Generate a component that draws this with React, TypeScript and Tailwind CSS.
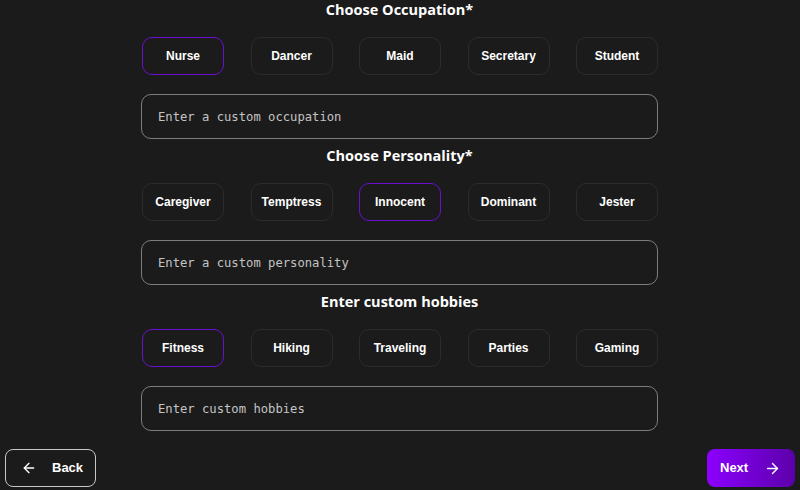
import { useState } from 'react';

const sections = [
  {
    title: 'Choose Occupation*',
    options: ['Nurse', 'Dancer', 'Maid', 'Secretary', 'Student'],
    selected: 'Nurse',
    placeholder: 'Enter a custom occupation',
  },
  {
    title: 'Choose Personality*',
    options: ['Caregiver', 'Temptress', 'Innocent', 'Dominant', 'Jester'],
    selected: 'Innocent',
    placeholder: 'Enter a custom personality',
  },
  {
    title: 'Enter custom hobbies',
    options: ['Fitness', 'Hiking', 'Traveling', 'Parties', 'Gaming'],
    selected: 'Fitness',
    placeholder: 'Enter custom hobbies',
  },
];

function ArrowLeft() {
  return (
    <svg width="16" height="16" viewBox="0 0 24 24" fill="none" stroke="currentColor" strokeWidth="2" strokeLinecap="round" strokeLinejoin="round">
      <path d="M19 12H5" />
      <path d="M12 19l-7-7 7-7" />
    </svg>
  );
}

function ArrowRight() {
  return (
    <svg width="17" height="17" viewBox="0 0 24 24" fill="none" stroke="currentColor" strokeWidth="2" strokeLinecap="round" strokeLinejoin="round">
      <path d="M5 12h14" />
      <path d="M12 5l7 7-7 7" />
    </svg>
  );
}

function Section({ title, options, selected, placeholder }: (typeof sections)[number]) {
  const [value, setValue] = useState(selected);
  return (
    <div className="flex flex-col">
      <h2 className="h-5 text-center text-[14.5px] leading-5 font-bold text-white font-['Open_Sans',sans-serif]">
        {title}
      </h2>
      <div className="mt-[17px] flex justify-between pl-px">
        {options.map((o) => (
          <button
            key={o}
            onClick={() => setValue(o)}
            className={`h-[38px] w-[82px] rounded-[10px] border text-[12px] font-bold text-white font-['Liberation_Sans',sans-serif] ${
              value === o ? 'border-[#6a0fd2]' : 'border-[#2c2c2c]'
            }`}
          >
            {o}
          </button>
        ))}
      </div>
      <input
        placeholder={placeholder}
        className="mt-[19px] h-[45px] w-full rounded-[10px] border border-[#7d7d7d] bg-transparent px-4 text-[12.2px] text-white placeholder:text-[#c4c4c4] font-['DejaVu_Sans_Mono',monospace] outline-none"
      />
    </div>
  );
}

export default function App() {
  return (
    <div className="h-[490px] w-[800px] overflow-hidden bg-[#1b1b1b]">
      <div className="ml-[141px] flex w-[517px] flex-col gap-[7px]">
        {sections.map((s) => (
          <Section key={s.title} {...s} />
        ))}
      </div>
      <div className="mt-[18px] flex items-center justify-between px-[5px]">
        <button className="flex h-[38px] w-[91px] items-center gap-[15px] rounded-[8px] border border-[#c8c8c8] pl-[15px] text-[13px] font-bold text-white font-['Liberation_Sans',sans-serif]">
          <ArrowLeft />
          Back
        </button>
        <button className="flex h-[38px] w-[88px] items-center gap-[16px] rounded-[8px] bg-gradient-to-r from-[#8c00ff] to-[#5c00aa] pl-[13px] text-[13px] font-bold text-white font-['Liberation_Sans',sans-serif]">
          Next
          <ArrowRight />
        </button>
      </div>
    </div>
  );
}
